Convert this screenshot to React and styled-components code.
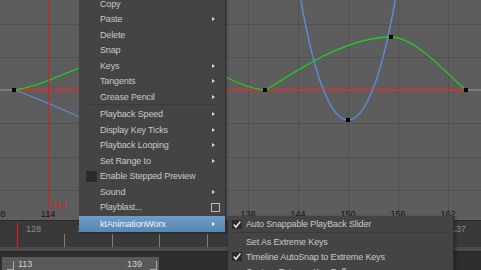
import React from "react";
import styled, { createGlobalStyle } from "styled-components";

const GlobalStyle = createGlobalStyle`
  html, body {
    margin: 0;
    padding: 0;
    width: 481px;
    height: 270px;
    overflow: hidden;
    background: #2c2c2c;
    font-family: "Liberation Sans", Arial, sans-serif;
  }
`;

const mainItems = [
  { label: "Copy" },
  { label: "Paste", sub: true },
  { label: "Delete" },
  { label: "Snap" },
  { label: "Keys", sub: true },
  { label: "Tangents", sub: true },
  { label: "Grease Pencil", sub: true },
  { divider: true },
  { label: "Playback Speed", sub: true },
  { label: "Display Key Ticks", sub: true },
  { label: "Playback Looping", sub: true },
  { label: "Set Range to", sub: true },
  { label: "Enable Stepped Preview", box: true },
  { label: "Sound", sub: true },
  { label: "Playblast...", option: true },
  { gap: true },
  { label: "ktAnimationWorx", sub: true, active: true },
];

const subItems = [
  { label: "Auto Snappable PlayBack Slider", checked: true, first: true },
  { divider: true },
  { label: "Set As Extreme Keys" },
  { label: "Timeline AutoSnap to Extreme Keys", checked: true },
  { label: "Custom Extreme Key Buffer" },
];

const gridX = [-2, 48, 98, 148, 198, 248, 298, 348, 398, 448];
const gridY = [24, 57, 123, 157, 190];
const frameLabels = [108, 114, 120, 126, 132, 138, 144, 150, 156, 162];
const keys = [
  [14, 90],
  [265, 90],
  [391, 37],
  [466, 90],
  [348, 120],
];

function CurveView() {
  return (
    <svg width="481" height="220" viewBox="0 0 481 220">
      {gridX.map((x) => (
        <line key={"gx" + x} x1={x + 0.5} y1="0" x2={x + 0.5} y2="220" stroke="#515151" />
      ))}
      {gridY.map((y) => (
        <line key={"gy" + y} x1="0" y1={y + 0.5} x2="481" y2={y + 0.5} stroke="#515151" />
      ))}

      <line x1="0" y1="90" x2="14" y2="90" stroke="#7c7c7c" strokeWidth="2" />
      <line x1="466" y1="90" x2="481" y2="90" stroke="#7c7c7c" strokeWidth="2" />
      <line x1="14" y1="90" x2="466" y2="90" stroke="#c93434" strokeWidth="2" />

      <path
        d="M14,90 C55,85 95,52 145,52 C195,52 232,88 265,90 C285,80 340,37 391,37 C415,37 445,72 466,90"
        fill="none"
        stroke="#22c922"
        strokeWidth="1.3"
      />
      <path d="M14,90 C32,96 60,108 95,124" fill="none" stroke="#5b90df" strokeWidth="1.3" />
      <path d="M296,-30 C326,170 370,170 400,-30" fill="none" stroke="#5b90df" strokeWidth="1.3" />

      <line x1="48.5" y1="0" x2="48.5" y2="220" stroke="#d42222" />

      {keys.map(([x, y]) => (
        <rect key={"k" + x} x={x - 2} y={y - 2} width="4" height="4" fill="#050505" />
      ))}

      {frameLabels.map((f, i) => (
        <text
          key={"f" + f}
          x={gridX[i]}
          y="217"
          fontSize="9"
          fill="#151515"
          textAnchor="middle"
          fontFamily="Liberation Sans, Arial, sans-serif"
        >
          {f}
        </text>
      ))}
      <text x="52" y="208" fontSize="9" fill="#e3201d" fontFamily="Liberation Sans, Arial, sans-serif">
        114
      </text>
    </svg>
  );
}

const ticks = [64, 112, 159, 207, 254, 302, 350, 397, 445];

function TimeRuler() {
  return (
    <svg width="481" height="26" viewBox="0 0 481 26">
      {ticks.map((x) => (
        <line key={x} x1={x + 0.5} y1="13" x2={x + 0.5} y2="26" stroke="#7d7d7d" />
      ))}
      <line x1="17.5" y1="2" x2="17.5" y2="26" stroke="#e01c1c" strokeWidth="1.2" />
      <text x="26" y="11" fontSize="9" fill="#8a8a8a" fontFamily="Liberation Sans, Arial, sans-serif">
        128
      </text>
      <text x="77" y="11" fontSize="9" fill="#8a8a8a" fontFamily="Liberation Sans, Arial, sans-serif">
        130
      </text>
      <text x="451" y="11" fontSize="9" fill="#8a8a8a" fontFamily="Liberation Sans, Arial, sans-serif">
        137
      </text>
    </svg>
  );
}

function Check() {
  return (
    <CheckBox>
      <svg width="10" height="9" viewBox="0 0 10 9">
        <path d="M1.8,4.6 L4,7 L8.4,1.4" fill="none" stroke="#f0f0f0" strokeWidth="1.5" />
      </svg>
    </CheckBox>
  );
}

export default function App() {
  return (
    <>
      <GlobalStyle />
      <Screen>
        <GraphView>
          <CurveView />
        </GraphView>
        <Timeline>
          <TimeRuler />
        </Timeline>
        <Band />
        <RangeRow>
          <RangeBar>
            <Handle />
            <RangeValue>113</RangeValue>
            <RangeValue $end>139</RangeValue>
            <Handle $end />
          </RangeBar>
        </RangeRow>

        <MainMenu>
          {mainItems.map((item, i) => {
            if (item.divider) return <Divider key={i} />;
            if (item.gap) return <Gap key={i} />;
            return (
              <MenuItem key={i} $active={item.active}>
                <Slot>{item.box && <EmptyBox />}</Slot>
                <Label>{item.label}</Label>
                {item.sub && <Arrow $active={item.active} />}
                {item.option && <OptionBox />}
              </MenuItem>
            );
          })}
        </MainMenu>

        <SubMenu>
          {subItems.map((item, i) => {
            if (item.divider) return <SubDivider key={i} />;
            return (
              <SubItem key={i} $first={item.first}>
                <SubSlot>{item.checked && <Check />}</SubSlot>
                <Label>{item.label}</Label>
              </SubItem>
            );
          })}
        </SubMenu>
      </Screen>
    </>
  );
}

const Screen = styled.div`
  position: relative;
  width: 481px;
  height: 270px;
  display: flex;
  flex-direction: column;
  overflow: hidden;
  background: #2c2c2c;
`;

const GraphView = styled.div`
  height: 220px;
  flex-shrink: 0;
  background: #5d5d5d;

  svg {
    display: block;
  }
`;

const Timeline = styled.div`
  height: 26px;
  border-top: 1px solid #2a2a2a;
  background: #393939;
  flex-shrink: 0;

  svg {
    display: block;
  }
`;

const Band = styled.div`
  height: 4px;
  background: #4b4b4b;
  flex-shrink: 0;
`;

const RangeRow = styled.div`
  flex: 1;
  border-top: 1px solid #262626;
  background: #2d2d2d;
  padding: 5px 0 0 2px;
`;

const RangeBar = styled.div`
  width: 157px;
  height: 14px;
  background: #595959;
  display: flex;
  align-items: center;
  padding: 0 2px 0 5px;
  box-sizing: border-box;
`;

const Handle = styled.div`
  width: 6px;
  height: 8px;
  border-right: 1px solid #a9a9a9;
  border-bottom: 1px solid #a9a9a9;
  margin-top: 2px;
  margin-left: ${(p) => (p.$end ? "8px" : "0")};
`;

const RangeValue = styled.span`
  font-size: 9px;
  color: #cfcfcf;
  margin-left: ${(p) => (p.$end ? "auto" : "4px")};
`;

const MainMenu = styled.div`
  position: absolute;
  left: 79px;
  top: -4.25px;
  width: 147px;
  background: #444444;
  border-right: 1px solid #2f2f2f;
  box-shadow: 1px 1px 2px rgba(0, 0, 0, 0.35);
  box-sizing: border-box;
`;

const MenuItem = styled.div`
  height: 15.5px;
  display: flex;
  align-items: center;
  padding: 0 10px 0 7px;
  font-size: 9px;
  letter-spacing: -0.15px;
  color: ${(p) => (p.$active ? "#f2f2f2" : "#c8c8c8")};
  background: ${(p) =>
    p.$active ? "linear-gradient(#6f9dca, #5886b3)" : "transparent"};
  white-space: nowrap;
`;

const Slot = styled.div`
  width: 14px;
  flex-shrink: 0;
  display: flex;
  align-items: center;
`;

const Label = styled.span`
  flex: 1;
`;

const EmptyBox = styled.div`
  width: 11px;
  height: 11px;
  background: #2b2b2b;
`;

const Arrow = styled.div`
  width: 0;
  height: 0;
  border-left: 3px solid ${(p) => (p.$active ? "#ffffff" : "#d8d8d8")};
  border-top: 2.5px solid transparent;
  border-bottom: 2.5px solid transparent;
`;

const OptionBox = styled.div`
  width: 7px;
  height: 7px;
  border: 1px solid #b9b9b9;
  margin-right: -5px;
`;

const Divider = styled.div`
  height: 2px;
  margin: 0 6px 0 5px;
  border-top: 1px solid #3a3a3a;
  box-sizing: border-box;
`;

const Gap = styled.div`
  height: 1.5px;
`;

const SubMenu = styled.div`
  position: absolute;
  left: 228px;
  top: 216px;
  width: 226px;
  background: #444444;
  border-right: 1px solid #2f2f2f;
  box-shadow: 1px 1px 3px rgba(0, 0, 0, 0.4);
  box-sizing: border-box;
`;

const SubItem = styled.div`
  height: ${(p) => (p.$first ? "16px" : "15px")};
  display: flex;
  align-items: center;
  padding: 0 8px 0 4px;
  font-size: 9px;
  letter-spacing: -0.15px;
  color: #c8c8c8;
  white-space: nowrap;
`;

const SubSlot = styled.div`
  width: 14px;
  flex-shrink: 0;
  display: flex;
  align-items: center;
`;

const CheckBox = styled.div`
  width: 10px;
  height: 9px;
  background: #2a2a2a;

  svg {
    display: block;
  }
`;

const SubDivider = styled.div`
  height: 2px;
  margin: 0 4px;
  border-top: 1px solid #3a3a3a;
  box-sizing: border-box;
`;
